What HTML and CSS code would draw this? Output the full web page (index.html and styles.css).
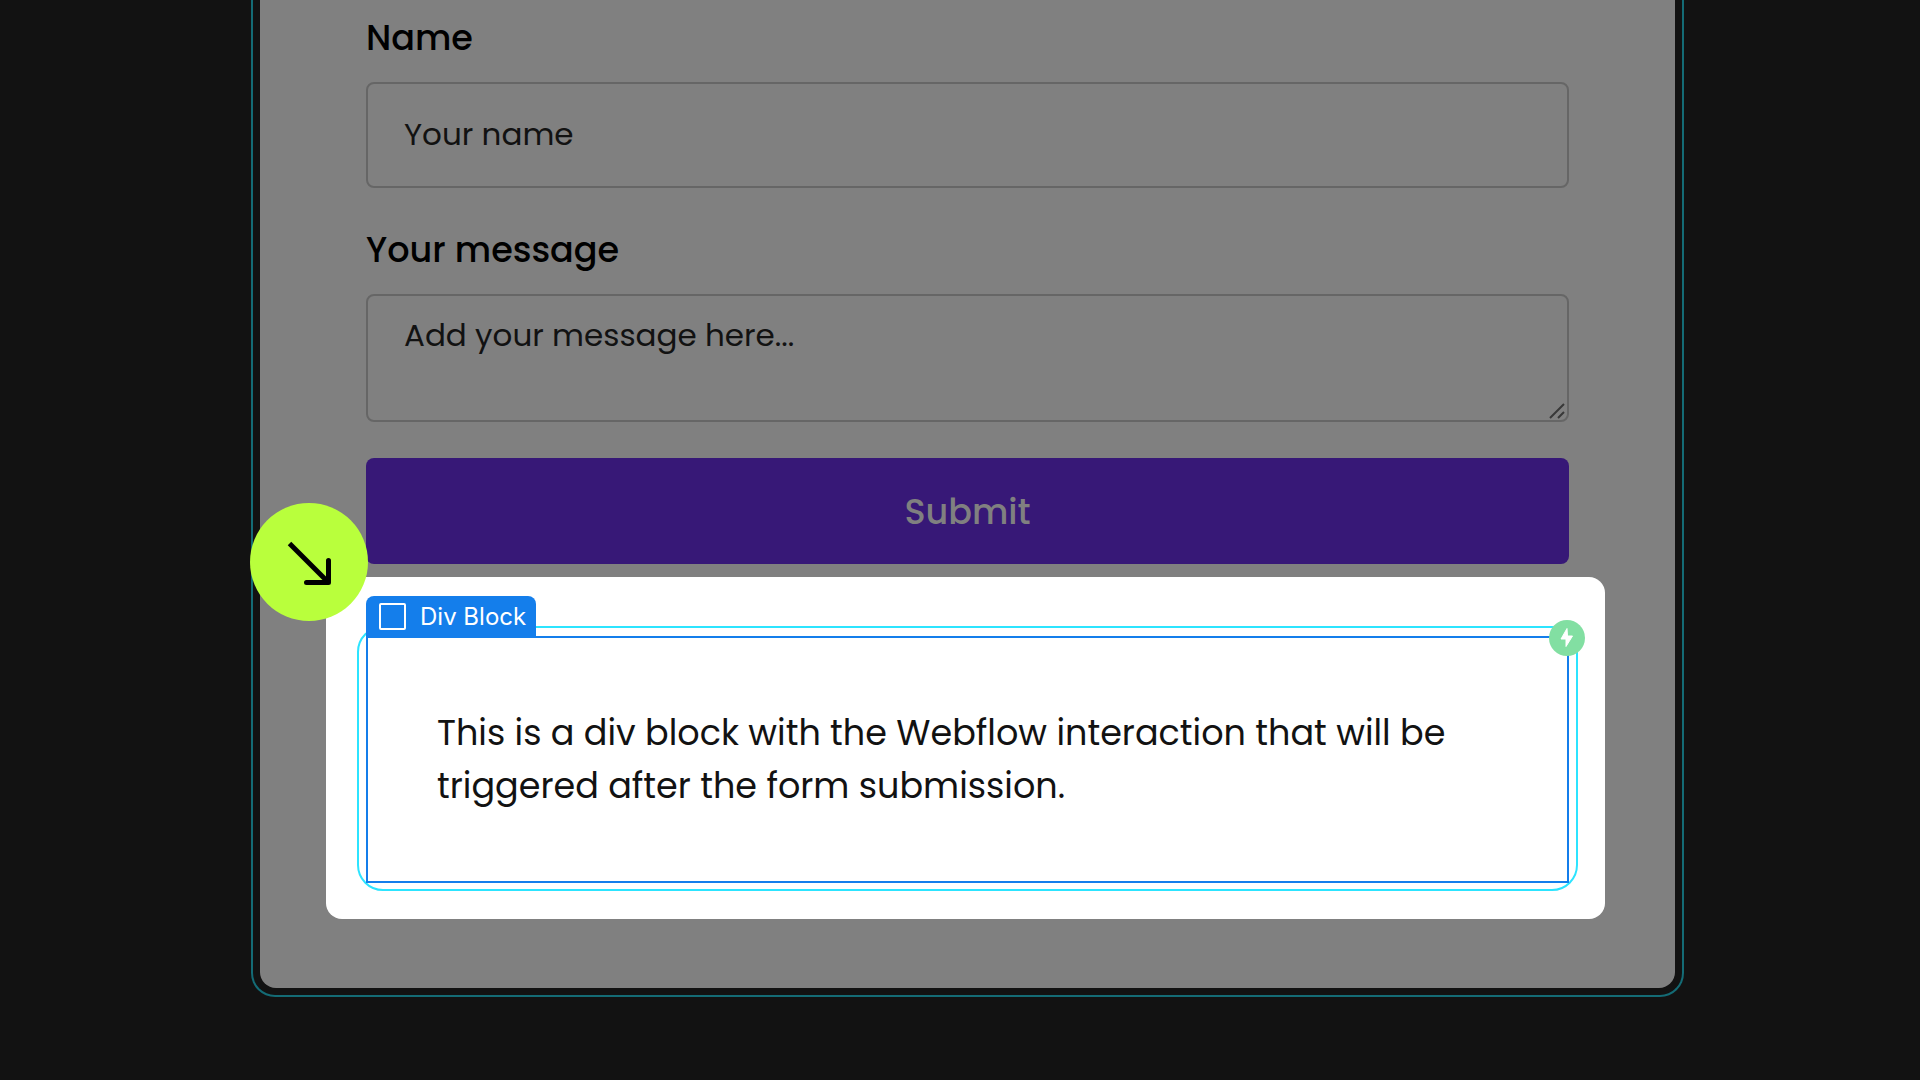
FILE: index.html
```html
<!DOCTYPE html>
<html lang="en">
<head>
<meta charset="utf-8">
<meta name="viewport" content="width=device-width, initial-scale=1">
<title>Contact form</title>
<link rel="stylesheet" href="styles.css">
</head>
<body>
<main class="stage">
  <div class="frame">
    <form class="card">
      <label class="label" for="name">Name</label>
      <input class="field" id="name" type="text" placeholder="Your name">
      <label class="label label-next" for="message">Your message</label>
      <div class="area-wrap">
        <textarea class="field area" id="message" placeholder="Add your message here..."></textarea>
        <svg class="grip" viewBox="0 0 16 16" aria-hidden="true"><path d="M1 15 15 1M9 15l6-6" fill="none" stroke="#383838" stroke-width="2"/></svg>
      </div>
      <button class="submit" type="button">Submit</button>
      <section class="panel">
        <div class="interaction">
          <div class="block">
            <p class="copy">This is a div block with the Webflow interaction that will be triggered after the form submission.</p>
            <span class="tag"><span class="tag-box"></span>Div Block</span>
            <svg class="bolt" viewBox="0 0 36 36" aria-hidden="true"><circle cx="18" cy="18" r="18" fill="#82dfa2"/><path d="M18 8.500 12 19h5v7.500L23.500 16H18.500z" fill="#fff" stroke="#fff" stroke-linejoin="round"/></svg>
          </div>
        </div>
        <svg class="pointer" viewBox="0 0 118 118" aria-hidden="true"><circle cx="59" cy="59" r="59" fill="#b9ff3c"/><path d="M39.500 40.500 78 79" fill="none" stroke="#000" stroke-width="5"/><path d="M56.500 79.500H78.500V57.500" fill="none" stroke="#000" stroke-width="5" stroke-linecap="round" stroke-linejoin="round"/></svg>
      </section>
    </form>
  </div>
</main>
</body>
</html>
```
FILE: styles.css
```css
* { box-sizing: border-box; }

body {
  margin: 0;
  background: #121212;
  font-family: Poppins, Inter, sans-serif;
  color: #121212;
}

.stage { padding: 0 236px 80px 251px; }

.frame {
  padding: 0 7px 7px;
  border: 2px solid #146b75;
  border-top: 0;
  border-radius: 0 0 24px 24px;
}

.card {
  display: flex;
  flex-direction: column;
  padding: 18px 106px 69px;
  background: #808080;
  border-radius: 0 0 16px 16px;
}

.label {
  margin-bottom: 24px;
  font-size: 35px;
  line-height: 40px;
  font-weight: 500;
  color: #000;
}

.label-next { margin-top: 42px; }

.field {
  display: block;
  width: 100%;
  height: 106px;
  padding: 0 36px 2px;
  border: 2px solid #666;
  border-radius: 8px;
  background: transparent;
  font: inherit;
  font-size: 31px;
  line-height: 40px;
  color: #121212;
}

.field::placeholder { color: #121212; opacity: 1; }

.area-wrap { position: relative; }

.area {
  height: 128px;
  padding-top: 19px;
  resize: none;
}

.grip {
  position: absolute;
  right: 4px;
  bottom: 3px;
  width: 16px;
  height: 16px;
}

.submit {
  height: 106px;
  margin-top: 36px;
  border: 0;
  border-radius: 8px;
  background: #371877;
  font: inherit;
  font-size: 35px;
  font-weight: 500;
  color: #808080;
}

.panel {
  position: relative;
  margin: 13px -36px 0 -40px;
  padding: 49px 27px 28px 31px;
  background: #fff;
  border-radius: 16px;
}

.interaction {
  padding: 8px 7px 6px;
  border: 2px solid #2ce4ff;
  border-radius: 26px;
}

.block {
  position: relative;
  padding: 68px 69px 69px;
  border: 2px solid #147eeb;
}

.copy {
  margin: 0;
  font-size: 35px;
  line-height: 53px;
}

.tag {
  position: absolute;
  left: -2px;
  bottom: 100%;
  display: flex;
  align-items: center;
  gap: 14px;
  height: 42px;
  padding: 0 10px 2px 13px;
  border-radius: 8px 8px 0 0;
  background: #147eeb;
  font-family: Inter, sans-serif;
  font-size: 24px;
  white-space: nowrap;
  color: #fff;
}

.tag-box {
  width: 27px;
  height: 27px;
  border: 2px solid #fff;
  border-radius: 2px;
}

.bolt {
  position: absolute;
  top: -18px;
  right: -18px;
  width: 36px;
  height: 36px;
}

.pointer {
  position: absolute;
  top: -74px;
  left: -76px;
  width: 118px;
  height: 118px;
}
```
